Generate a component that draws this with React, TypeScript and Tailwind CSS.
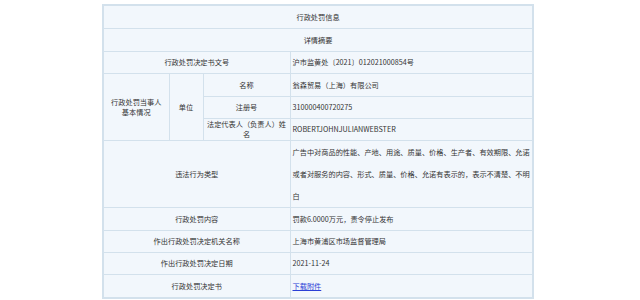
import React from "react";

const td = "border border-[#d3e1ec] bg-[#f2f7fc] px-[2px] align-middle";
const lab = td + " text-center";
const val = td + " text-left";

export default function App() {
  return (
    <div className="w-[640px] h-[300px] bg-white pt-[4px] pl-[102px]" style={{ fontFamily: '"Noto Sans CJK SC", "Noto Sans", sans-serif' }}>
      <table className="w-[430px] border-collapse border-2 border-[#d3e1ec] table-fixed text-[7.2px] text-[#333] leading-[10px]">
        <colgroup>
          <col className="w-[66px]" />
          <col className="w-[34px]" />
          <col className="w-[87px]" />
          <col className="w-[243px]" />
        </colgroup>
        <tbody>
          <tr className="h-[23px]">
            <td colSpan={4} className={lab}>行政处罚信息</td>
          </tr>
          <tr className="h-[23px]">
            <td colSpan={4} className={lab}>详情摘要</td>
          </tr>
          <tr className="h-[22px]">
            <td colSpan={3} className={lab}>行政处罚决定书文号</td>
            <td className={val}>沪市监黄处〔2021〕012021000854号</td>
          </tr>
          <tr className="h-[23px]">
            <td rowSpan={3} className={lab}>行政处罚当事人<br />基本情况</td>
            <td rowSpan={3} className={lab}>单位</td>
            <td className={lab}>名称</td>
            <td className={val}>翁森贸易（上海）有限公司</td>
          </tr>
          <tr className="h-[22px]">
            <td className={lab}>注册号</td>
            <td className={val}>310000400720275</td>
          </tr>
          <tr className="h-[22px]">
            <td className={lab}>法定代表人（负责人）姓名</td>
            <td className={val}>ROBERTJOHNJULIANWEBSTER</td>
          </tr>
          <tr className="h-[66px]">
            <td colSpan={3} className={lab}>违法行为类型</td>
            <td className={val + " leading-[22px]"}>广告中对商品的性能、产地、用途、质量、价格、生产者、有效期限、允诺或者对服务的内容、形式、质量、价格、允诺有表示的，表示不清楚、不明白</td>
          </tr>
          <tr className="h-[23px]">
            <td colSpan={3} className={lab}>行政处罚内容</td>
            <td className={val}>罚款6.0000万元，责令停止发布</td>
          </tr>
          <tr className="h-[22px]">
            <td colSpan={3} className={lab}>作出行政处罚决定机关名称</td>
            <td className={val}>上海市黄浦区市场监督管理局</td>
          </tr>
          <tr className="h-[22px]">
            <td colSpan={3} className={lab}>作出行政处罚决定日期</td>
            <td className={val}>2021-11-24</td>
          </tr>
          <tr className="h-[24px]">
            <td colSpan={3} className={lab}>行政处罚决定书</td>
            <td className={val}>
              <a className="text-[#2b3fd6] underline">下载附件</a>
            </td>
          </tr>
        </tbody>
      </table>
    </div>
  );
}
